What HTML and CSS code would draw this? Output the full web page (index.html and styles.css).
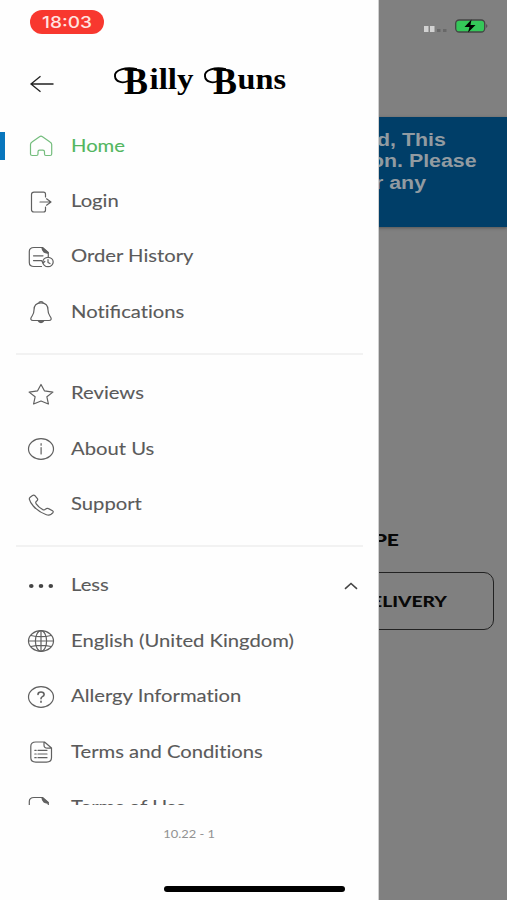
FILE: index.html
```
<!DOCTYPE html>
<html lang="en">
<head>
<meta charset="utf-8">
<title>Billy Buns</title>
<link rel="stylesheet" href="styles.css">
</head>
<body>
<div class="screen">
  <main class="page">
    <header class="status">
      <svg class="signal" width="24" height="8" viewBox="0 0 24 8"><path fill="#d2d2d2" d="M0 1h4.500v6H0zM6 1h4.500v6H6z"/><path fill="#686868" d="M13 4h3.500v3H13zM19 4h3.500v3H19z"/></svg>
      <svg class="battery" width="34" height="14" viewBox="0 0 34 14"><rect x=".7" y="1" width="29" height="12" rx="3.500" fill="#35c759" stroke="#444" stroke-width="1.300"/><path d="M31 5q3 2 0 4z" fill="#555"/><path d="M16.500 .5 9.500 8h5l-1.500 5.500L20.500 6h-5z" fill="#000"/></svg>
    </header>
    <section class="notice">
      <p><span class="wide">d, This</span></p>
      <p><span class="wide">on. Please</span></p>
      <p><span class="wide">r any</span></p>
    </section>
    <h2 class="type"><span>ORDER TYPE</span></h2>
    <div class="delivery"><span>DELIVERY</span></div>
  </main>

  <aside class="drawer">
    <div class="clock"><span>18:03</span></div>
    <div class="brand">
      <svg class="back" width="26" height="20" viewBox="0 0 26 20"><path d="M24.500 10H2M11.500 2.200 2 10l9.500 7.800"/></svg>
      <svg class="logo" width="178" height="36" viewBox="0 0 178 36">
        <g class="logo-text">
          <text x="11" y="29.500" class="cap" textLength="24" lengthAdjust="spacingAndGlyphs">B</text>
          <text x="36.500" y="25" textLength="44" lengthAdjust="spacingAndGlyphs">illy</text>
          <text x="100" y="29.500" class="cap" textLength="24" lengthAdjust="spacingAndGlyphs">B</text>
          <text x="124.500" y="25" textLength="48.500" lengthAdjust="spacingAndGlyphs">uns</text>
        </g>
        <g class="swash"><path d="M24 5.200C13 2.500 1 6 2 12.300c.5 5.200 7 7.700 13 4.700"/><path d="M113 5.200c-11-2.700-22 .8-21 7.100.5 5.200 7 7.700 13 4.700"/></g>
      </svg>
    </div>

    <nav class="menu">
      <ul class="group">
        <li class="item active"><svg class="icon" viewBox="0 0 28 24"><path d="M3.500 10.500Q3.500 9 5 8l7.500-5.300q1.500-1 3 0L23 8q1.700 1 1.700 2.500V20q0 1.500-1.600 1.500h-4.300q-1.300 0-1.300-1.500v-2.300q0-1.500-1.700-1.500h-3.200q-1.600 0-1.600 1.500V20q0 1.500-1.500 1.500H5.200q-1.700 0-1.700-1.500z"/></svg><span>Home</span></li>
        <li class="item"><svg class="icon" viewBox="0 0 28 24"><path d="M18.500 7V4.200q0-2-2-2H7q-2.500 0-2.500 2.300v15.300Q4.500 22 7 22h9.500q2 0 2-2v-3M13 12h10.500M19.500 8.800l4.500 3.200-4.500 3.200"/></svg><span>Login</span></li>
        <li class="item"><svg class="icon" viewBox="0 0 28 24"><path d="M14.500 21.500H7q-4.700 0-4.700-4V6.500q0-4 4.700-4h8.500l5.800 5v4.300M15 2.800q.2 2.700 2 4.200 1.600 1.200 4.300 1M6.500 10.800H16M6.500 15.600h8"/><path class="fold" d="M15.300 2.700 21 7.600q-4.500.3-5.700-4.900z"/><ellipse cx="21" cy="17" rx="5.200" ry="4.700"/><path d="M21 14.500v3l2 1M14.800 16l1.200 2 1.800-1.500"/></svg><span>Order History</span></li>
        <li class="item"><svg class="icon" viewBox="0 0 28 24"><path d="M14 2.800c-5 0-7 3.200-7 7.200 0 4.400-1.500 5.200-2.700 7.200-1 1.800-.5 3.300 1.700 3.300h16c2.200 0 2.700-1.500 1.700-3.300-1.200-2-2.700-2.800-2.700-7.200 0-4-2-7.200-7-7.200zM11.500 3.200Q12 1.500 14 1.500t2.500 1.700"/><path class="fold" d="M11.200 20.800q.8 1.800 2.800 1.800t2.800-1.800z"/></svg><span>Noti<b class="lig">fi</b>cations</span></li>
      </ul>
      <ul class="group">
        <li class="item"><svg class="icon" viewBox="0 0 28 24"><path d="m14 2.500 3.400 6.300 8.500 1.300-6 4.700 1.500 7.200-7.400-3-7.400 3 1.500-7.200-6-4.700 8.500-1.300z"/></svg><span>Reviews</span></li>
        <li class="item"><svg class="icon" viewBox="0 0 28 24"><ellipse cx="14" cy="12" rx="12.500" ry="10.300"/><path d="M14.100 10.500v6.500M14.100 6.700v1.500"/></svg><span>About Us</span></li>
        <li class="item"><svg class="icon" viewBox="0 0 28 24"><path d="M3.200 4.200 5.500 2.500q1.300-.8 2.600.3l2.300 2.900q.8 1.200-.6 2.200-1.800 1.300-.6 2.900 2.400 3.400 6.500 5.800 1.700.8 2.800-.4 1.400-1.500 3-.6l4 2.100q1.300.9.4 2l-1.800 1.500q-2 1.400-4.700.5Q11.500 19 6.300 13 3 9 2.300 6.100q-.1-1.100.9-1.900z"/></svg><span>Support</span></li>
      </ul>
      <ul class="group">
        <li class="item"><svg class="icon dots" viewBox="0 0 28 24"><ellipse cx="4.300" cy="12" rx="2.300" ry="2"/><ellipse cx="14" cy="12" rx="2.300" ry="2"/><ellipse cx="23.800" cy="12" rx="2.300" ry="2"/></svg><span>Less</span><svg class="chevron" width="14" height="8" viewBox="0 0 14 8"><path d="m1 6.800 6-5.300 6 5.300"/></svg></li>
        <li class="item"><svg class="icon" viewBox="0 0 28 24"><ellipse cx="14" cy="12" rx="12.500" ry="10.300"/><ellipse cx="14" cy="12" rx="5.600" ry="10.300"/><path d="M14 1.700v20.600M1.500 12h25M4 6.500q10 2.400 20 0M4 17.500q10-2.400 20 0"/></svg><span>English (United Kingdom)</span></li>
        <li class="item"><svg class="icon" viewBox="0 0 28 24"><ellipse cx="14" cy="12" rx="12.500" ry="10.300"/><path class="bold" d="M11 9.500q0-2.500 3-2.500t3.100 2.400q0 1.400-1.700 2.200-1.400.7-1.400 2.200M14 16.200v1"/></svg><span>Allergy Information</span></li>
        <li class="item"><svg class="icon" viewBox="0 0 28 24"><path d="M17.500 2H8.800q-5 0-5 4.300v11.500q0 4.300 5 4.300h10.700q5 0 5-4.300V8zM17 2.300V5q0 3.200 3.500 3.200h3.800M11 10.300h9M11 14h9M11 17.700h9M7.800 10.300h1.400M7.800 14h1.400M7.800 17.700h1.400"/></svg><span>Terms and Conditions</span></li>
        <li class="item"><svg class="icon" viewBox="0 0 28 24"><path d="M14.500 21.500H7q-4.700 0-4.700-4V6.500q0-4 4.700-4h8.500l5.800 5v4.300M15 2.800q.2 2.700 2 4.200 1.600 1.200 4.300 1"/><path class="fold" d="M15.300 2.700 21 7.600q-4.500.3-5.700-4.900z"/></svg><span>Terms of Use</span></li>
      </ul>
    </nav>
    <footer class="version"><span>10.22 - 1</span></footer>
  </aside>
  <div class="home-bar"></div>
</div>
</body>
</html>
```
FILE: styles.css
```
* { box-sizing: border-box; margin: 0; padding: 0; }
body { background: #808080; font-family: Lato, "Liberation Sans", sans-serif; }
.screen { position: relative; width: 507px; height: 900px; overflow: hidden; }

.page { height: 900px; background: #808080; }
.status { height: 117px; padding: 19px 18px 0 0; display: flex; justify-content: flex-end; gap: 7px; }
.signal { margin-top: 6px; }
.notice { height: 110px; padding: 13px 0 0 377px; background: #003e68; color: #929ba1; box-shadow: 0 1px 3px #555; font: bold 17.500px/21.300px "Liberation Sans", sans-serif; }
.notice p { white-space: nowrap; }
.wide { display: inline-block; transform: scaleX(1.22); transform-origin: left; }
.notice p:nth-child(2) { margin-left: -6px; }
.notice p:nth-child(3) { margin-left: -2px; }
.type { margin-top: 302px; height: 22px; padding-right: 108px; text-align: right; font: 900 17px/22px Lato, sans-serif; color: #080808; }
.type span, .delivery span { display: inline-block; transform: scaleX(1.24); transform-origin: right; }
.delivery { margin: 21px 13px 0 200px; height: 58px; padding-right: 46px; border: 1.500px solid #222; border-radius: 10px; text-align: right; font: 900 15.500px/56px Lato, sans-serif; color: #080808; }

.drawer { position: absolute; left: 0; top: 0; width: 379px; height: 900px; padding-top: 10px; display: flex; flex-direction: column; background: #fefefe; border-right: 1px solid #d0d0d0; }
.clock { width: 74px; height: 24px; margin-left: 30px; border-radius: 12px; background: #f8382f; color: #ffe4e0; text-align: center; font: 500 16px/25px Inter, sans-serif; }
.clock span { display: inline-block; transform: scaleX(1.19); }
.brand { height: 84px; padding: 30px 0 0 29px; display: flex; }
.back { margin-top: 10px; fill: none; stroke: #222; stroke-width: 1.300; }
.logo { margin-left: 58px; overflow: visible; }
.logo-text { font: bold 29px "Liberation Serif", serif; fill: #000; }
.logo-text .cap { font-size: 38px; }
.swash { fill: none; stroke: #000; stroke-width: 1.900; }

.menu { height: 686.500px; overflow: hidden; flex: none; }
.group { list-style: none; }
.group + .group { margin: 13.700px 15px 0 16px; padding-top: 10.300px; border-top: 2px solid #f2f2f2; }
.group + .group .item { margin-left: -16px; margin-right: -15px; }
.item { position: relative; height: 55.400px; padding-left: 27px; display: flex; align-items: center; color: #5a5a5a; font-size: 17px; line-height: 24px; }
.item span { margin-left: 16px; transform: scaleX(1.19); transform-origin: left; white-space: nowrap; font-variant-ligatures: none; -webkit-text-stroke: .1px currentColor; }
.lig { font-weight: inherit; font-variant-ligatures: normal; }
.icon { width: 28px; height: 24px; margin-top: 1px; flex: none; fill: none; stroke: #606060; stroke-width: 1.200; stroke-linejoin: round; stroke-linecap: round; }
.icon .bold { stroke-width: 1.600; }
.icon .fold { fill: #777; }
.icon.dots { fill: #444; stroke: none; }
.chevron { margin-left: auto; margin-right: 20px; margin-top: 2px; fill: none; stroke: #444; stroke-width: 1.600; }
.active { color: #52b660; }
.active .icon { stroke: #74bd7d; }
.active::before { content: ""; position: absolute; left: 0; top: 14px; width: 5px; height: 28px; background: #0876bd; }
.version { margin-top: 20px; text-align: center; color: #929292; font-size: 11.500px; line-height: 18px; }
.version span { display: inline-block; transform: scaleX(1.12); }
.home-bar { position: absolute; left: 164px; top: 885.500px; width: 181px; height: 6px; border-radius: 3px; background: #000; }
```
